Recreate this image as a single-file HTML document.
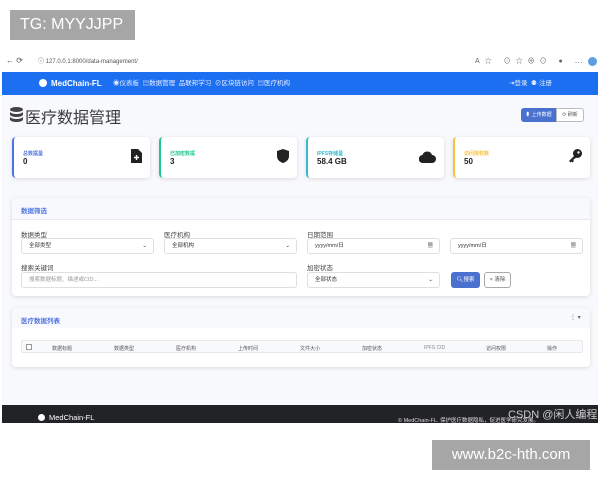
<!DOCTYPE html>
<html><head><meta charset="utf-8">
<style>
*{box-sizing:border-box;margin:0;padding:0}
body{width:600px;height:480px;background:#fff;font-family:"Liberation Sans","Noto Sans CJK SC",sans-serif;position:relative;overflow:hidden;color:#333}
.abs{position:absolute}
.tg{left:10px;top:10px;width:125px;height:30px;background:#a6a6a6;color:#fff;font-size:16px;line-height:30px;padding-left:10px}
.wm{left:432px;top:440px;width:158px;height:30px;background:#a6a6a6;color:#fff;font-size:15px;line-height:30px;text-align:center}
.bar{left:0;top:53px;width:600px;height:19px;background:#fff;font-size:6px;color:#555}
.url{left:30px;top:3px;width:380px;height:13px;line-height:13px;padding-left:8px}
.page{left:2px;top:72px;width:596px;height:351px;background:#f8f9fc}
.nav{left:0;top:0;width:596px;height:23px;background:#1d6ff2;color:#e6eeff;font-size:6.5px;line-height:23px}
.card{background:#fff;border-radius:4px;box-shadow:0 1px 4px rgba(0,0,0,.12)}
.stat{top:65px;height:41px;border-left:2px solid}
.stat .l{position:absolute;left:9px;top:13px;font-size:5px;font-weight:bold}
.stat .v{position:absolute;left:9px;top:20px;font-size:8px;font-weight:bold;color:#222}
.stat svg{position:absolute;right:8px;top:12px}
.lbl{font-size:6.5px;color:#444}
.inp{height:16px;border:1px solid #dcdfe4;border-radius:3px;background:#fff;font-size:5.5px;line-height:14px;padding-left:7px;color:#333}
.th{font-size:5px;color:#555;top:4px}
</style></head><body>
<div class="abs tg">TG: MYYJJPP</div>
<div class="abs bar"><span class="abs" style="left:6px;top:3px;font-size:8px">← ⟳</span><div class="abs url">ⓘ 127.0.0.1:8000/data-management/</div>
<span class="abs" style="left:475px;top:3px;font-size:7px;color:#666;letter-spacing:5px">A☆ ⊙☆⊕⊙ ● ⋯</span><span class="abs" style="left:588px;top:4px;width:9px;height:9px;border-radius:50%;background:#5aa0e0"></span></div>
<div class="abs page">
 <div class="abs nav">
  <span class="abs" style="left:37px;top:7px;width:8px;height:8px;border-radius:50%;background:#fff"></span>
  <span class="abs" style="left:49px;color:#fff;font-weight:bold;font-size:8px">MedChain-FL</span>
  <span class="abs" style="left:111px">◉仪表板 &nbsp;▤数据管理 &nbsp;品联邦学习 &nbsp;⊘区块链访问 &nbsp;▤医疗机构</span>
  <span class="abs" style="left:507px">⇥登录 &nbsp;⚉·注册</span>
 </div>
 <svg class="abs" style="left:8px;top:35px" width="13" height="15" viewBox="0 0 13 15"><ellipse cx="6.5" cy="2.5" rx="6.5" ry="2.5" fill="#444"/><path d="M0 4.5v3c0 1.4 2.9 2.5 6.5 2.5S13 8.9 13 7.5v-3c0 1.4-2.9 2.5-6.5 2.5S0 5.9 0 4.5zM0 9.5v3c0 1.4 2.9 2.5 6.5 2.5S13 13.9 13 12.5v-3c0 1.4-2.9 2.5-6.5 2.5S0 10.9 0 9.5z" fill="#444"/></svg>
 <div class="abs" style="left:23px;top:32px;font-size:16px;color:#3a3a3a">医疗数据管理</div>
 <div class="abs" style="left:519px;top:36px;width:35px;height:14px;background:#4a70d0;border-radius:3px 0 0 3px;color:#fff;font-size:5px;line-height:14px;text-align:center">⬆ 上传数据</div>
 <div class="abs" style="left:554px;top:36px;width:28px;height:14px;border:1px solid #bbb;border-radius:0 3px 3px 0;color:#555;font-size:5px;line-height:12px;text-align:center;background:#fff">⟳ 刷新</div>

 <div class="abs card stat" style="left:10px;width:138px;border-color:#4e73df"><div class="l" style="color:#4e73df">总数据量</div><div class="v">0</div>
  <svg width="11" height="14" viewBox="0 0 11 14"><path d="M0 0h7l4 4v10H0z" fill="#222"/><path d="M5.5 6v5M3 8.5h5" stroke="#fff" stroke-width="1.4"/></svg></div>
 <div class="abs card stat" style="left:157px;width:138px;border-color:#1cc88a"><div class="l" style="color:#1cc88a">已加密数据</div><div class="v">3</div>
  <svg width="12" height="14" viewBox="0 0 12 14"><path d="M6 0L12 2v5c0 4-3 6-6 7C3 13 0 11 0 7V2z" fill="#222"/></svg></div>
 <div class="abs card stat" style="left:304px;width:138px;border-color:#36b9cc"><div class="l" style="color:#36b9cc">IPFS存储量</div><div class="v">58.4 GB</div>
  <svg width="17" height="13" viewBox="0 0 17 13" style="top:14px"><path d="M4 12a4 4 0 0 1-.5-8A5 5 0 0 1 13 4a4 4 0 0 1 0 8z" fill="#222"/></svg></div>
 <div class="abs card stat" style="left:451px;width:137px;border-color:#f6c23e"><div class="l" style="color:#f6c23e">访问授权数</div><div class="v">50</div>
  <svg width="14" height="14" viewBox="0 0 14 14"><circle cx="9.5" cy="4.5" r="4.5" fill="#222"/><path d="M7 6L1 12l1.5 1.5 1-1 1 1 1.5-1.5-1-1L9 8z" fill="#222"/><circle cx="10.5" cy="3.5" r="1.2" fill="#fff"/></svg></div>

 <div class="abs card" style="left:10px;top:126px;width:578px;height:98px;overflow:hidden">
  <div class="abs" style="left:0;top:0;width:578px;height:22px;background:#f8f9fc;border-bottom:1px solid #e8e8ee"></div>
  <div class="abs" style="left:9px;top:7px;font-size:6.5px;color:#4e73df;font-weight:bold">数据筛选</div>
  <div class="abs lbl" style="left:9px;top:31px">数据类型</div>
  <div class="abs lbl" style="left:152px;top:31px">医疗机构</div>
  <div class="abs lbl" style="left:295px;top:31px">日期范围</div>
  <div class="abs inp" style="left:9px;top:40px;width:133px">全部类型<span style="float:right;margin-right:6px">⌄</span></div>
  <div class="abs inp" style="left:152px;top:40px;width:133px">全部机构<span style="float:right;margin-right:6px">⌄</span></div>
  <div class="abs inp" style="left:295px;top:40px;width:133px">yyyy/mm/日<span style="float:right;margin-right:6px">▦</span></div>
  <div class="abs inp" style="left:438px;top:40px;width:133px">yyyy/mm/日<span style="float:right;margin-right:6px">▦</span></div>
  <div class="abs lbl" style="left:9px;top:64px">搜索关键词</div>
  <div class="abs lbl" style="left:295px;top:64px">加密状态</div>
  <div class="abs inp" style="left:9px;top:74px;width:276px;color:#999">搜索数据标题、描述或CID...</div>
  <div class="abs inp" style="left:295px;top:74px;width:133px">全部状态<span style="float:right;margin-right:6px">⌄</span></div>
  <div class="abs" style="left:439px;top:74px;width:29px;height:16px;background:#4a70d0;border-radius:3px;color:#fff;font-size:5.5px;line-height:16px;text-align:center">🔍︎搜索</div>
  <div class="abs" style="left:472px;top:74px;width:27px;height:16px;border:1px solid #aaa;border-radius:3px;color:#555;font-size:5.5px;line-height:14px;text-align:center">× 清除</div>
 </div>

 <div class="abs card" style="left:10px;top:236px;width:578px;height:59px;overflow:hidden">
  <div class="abs" style="left:0;top:0;width:578px;height:20px;background:#f8f9fc"></div>
  <div class="abs" style="left:9px;top:7px;font-size:6.5px;color:#4e73df;font-weight:bold">医疗数据列表</div>
  <div class="abs" style="left:558px;top:6px;font-size:6px;color:#666">⋮ ▾</div>
  <div class="abs" style="left:9px;top:32px;width:562px;height:13px;background:#f8f9fb;border:1px solid #e6e8ec;border-radius:2px">
   <span class="abs" style="left:4px;top:3px;width:6px;height:6px;border:1px solid #999;background:#fff"></span>
   <span class="abs th" style="left:30px">数据标题</span><span class="abs th" style="left:92px">数据类型</span><span class="abs th" style="left:154px">医疗机构</span><span class="abs th" style="left:216px">上传时间</span><span class="abs th" style="left:278px">文件大小</span><span class="abs th" style="left:340px">加密状态</span><span class="abs th" style="left:402px;color:#888">IPFS CID</span><span class="abs th" style="left:464px">访问权限</span><span class="abs th" style="left:525px">操作</span>
  </div>
 </div>

 <div class="abs" style="left:0;top:333px;width:596px;height:18px;background:#222326">
  <span class="abs" style="left:36px;top:9px;width:7px;height:7px;border-radius:50%;background:#fff"></span>
  <span class="abs" style="left:47px;top:8px;color:#fff;font-size:7.5px">MedChain-FL</span>
  <span class="abs" style="left:396px;top:11px;color:#ddd;font-size:5.5px">© MedChain-FL. 保护医疗数据隐私，促进医学研究发展。</span>
  <span class="abs" style="left:506px;top:1px;color:#ccc;font-size:11px">CSDN @闲人编程</span>
 </div>
</div>
<div class="abs wm">www.b2c-hth.com</div>
</body></html>
